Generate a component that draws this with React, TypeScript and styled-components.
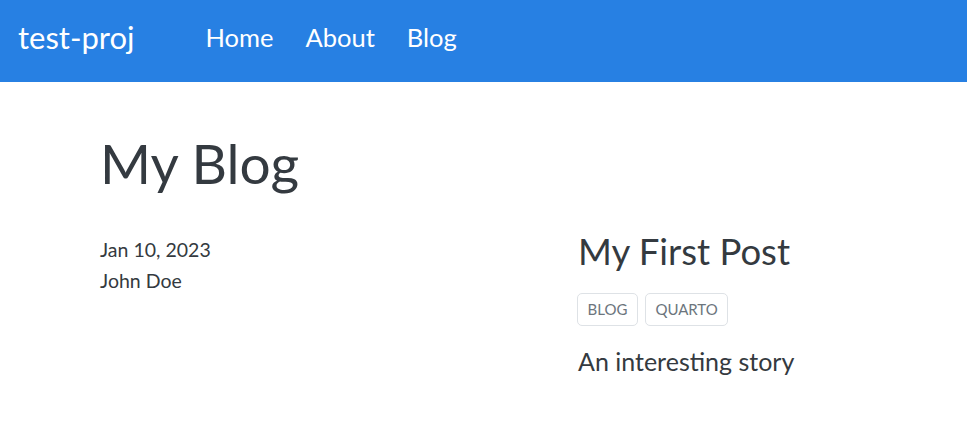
import React from "react";
import styled, { createGlobalStyle } from "styled-components";

const Global = createGlobalStyle`
  html, body { margin: 0; padding: 0; background: #fff; }
  body { font-family: "Lato", "Open Sans", sans-serif; color: #343a40; }
`;

const NavBar = styled.header`
  height: 82px;
  background: #2780e3;
  display: flex;
  align-items: center;
  padding-left: 18px;
  box-sizing: border-box;
`;

const Brand = styled.a`
  color: #fff;
  font-size: 31px;
  text-decoration: none;
  margin-right: 71px;
  margin-top: -8px;
`;

const NavLinks = styled.nav`
  display: flex;
  gap: 32px;
  margin-top: -8px;
`;

const NavLink = styled.a`
  color: #fff;
  font-size: 25.5px;
  text-decoration: none;
`;

const Main = styled.main`
  padding: 0 0 0 100px;
`;

const Title = styled.h1`
  font-size: 55px;
  font-weight: 400;
  margin: 48px 0 0;
  line-height: 1.2;
`;

const Row = styled.div`
  display: grid;
  grid-template-columns: 478px 1fr;
  margin-top: 34px;
`;

const Meta = styled.div`
  font-size: 19.5px;
  line-height: 31px;
  padding-top: 4px;
`;

const Post = styled.div`
  display: flex;
  flex-direction: column;
  align-items: flex-start;
`;

const PostTitle = styled.h2`
  font-size: 36.5px;
  font-weight: 400;
  margin: 0;
  line-height: 1.2;
`;

const Tags = styled.div`
  display: flex;
  gap: 7px;
  margin-top: 19px;
  margin-left: -1px;
`;

const Tag = styled.span`
  border: 1px solid #dee2e6;
  border-radius: 5px;
  color: #6c757d;
  font-size: 15px;
  height: 33px;
  box-sizing: border-box;
  display: flex;
  align-items: center;
  padding: 0 9.5px;
`;

const Desc = styled.p`
  font-size: 25px;
  margin: 20px 0 0;
`;

export default function App() {
  return (
    <>
      <Global />
      <NavBar>
        <Brand>test-proj</Brand>
        <NavLinks>
          <NavLink>Home</NavLink>
          <NavLink>About</NavLink>
          <NavLink>Blog</NavLink>
        </NavLinks>
      </NavBar>
      <Main>
        <Title>My Blog</Title>
        <Row>
          <Meta>
            <div>Jan 10, 2023</div>
            <div>John Doe</div>
          </Meta>
          <Post>
            <PostTitle>My First Post</PostTitle>
            <Tags>
              <Tag>BLOG</Tag>
              <Tag>QUARTO</Tag>
            </Tags>
            <Desc>An interesting story</Desc>
          </Post>
        </Row>
      </Main>
    </>
  );
}
